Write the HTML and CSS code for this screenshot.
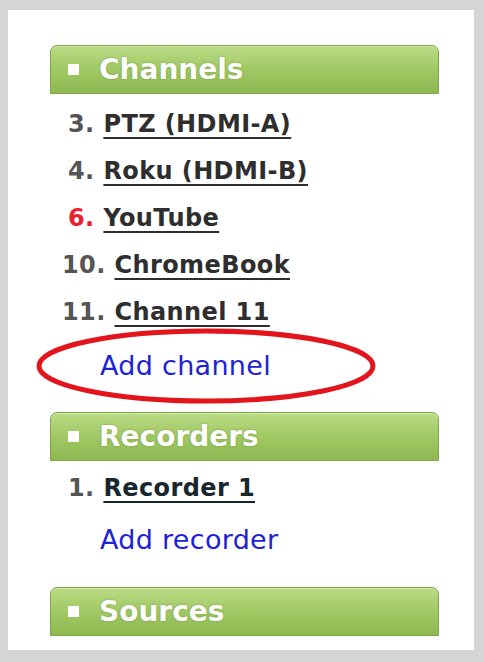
FILE: index.html
```html
<!DOCTYPE html>
<html>
<head>
    <meta charset="UTF-8">
    <title>Channels</title>
    <link rel="stylesheet" href="styles.css">
</head>
<body>
    <div class="panel">
        <div class="head"><span class="bullet"></span>Channels</div>
        <ul class="list channels">
            <li class="item"><span class="num">3.</span> <a href="#">PTZ (HDMI-A)</a></li>
            <li class="item"><span class="num">4.</span> <a href="#">Roku (HDMI-B)</a></li>
            <li class="item"><span class="num live">6.</span> <a href="#">YouTube</a></li>
            <li class="item wide"><span class="num">10.</span> <a href="#">ChromeBook</a></li>
            <li class="item wide"><span class="num">11.</span> <a href="#">Channel 11</a></li>
        </ul>
        <a class="add add-channel" href="#">Add channel</a>

        <div class="head head-rec"><span class="bullet"></span>Recorders</div>
        <ul class="list recorders">
            <li class="item"><span class="num">1.</span> <a class="rec" href="#">Recorder 1</a></li>
        </ul>
        <a class="add add-recorder" href="#">Add recorder</a>

        <div class="head head-src"><span class="bullet"></span>Sources</div>

        <!-- red circle drawn over "Add channel" -->
        <svg class="mark" width="344" height="80" viewBox="0 0 344 80">
            <ellipse cx="172" cy="38" rx="167" ry="35" fill="none" stroke="#e2141c" stroke-width="5"/>
        </svg>
    </div>
</body>
</html>
```

FILE: styles.css
```css
body {
    margin: 0;
    background-color: #d5d5d5;
    font-family: "DejaVu Sans", Verdana, sans-serif;
}

.panel {
    position: relative;
    margin: 10px 10px 0 8px;
    height: 640px;
    padding: 35px 35px 0 42px;
    box-sizing: border-box;
    background-color: #fff;
}

.head {
    display: flex;
    align-items: center;
    height: 49px;
    box-sizing: border-box;
    padding-left: 17px;
    border: 1px solid #7ea645;
    border-radius: 7px 7px 0 0;
    background: linear-gradient(#bcdb86, #a2ca66 45%, #8db951);
    box-shadow: inset 0 1px 0 #d3e8ab;
    color: #fff;
    font-size: 28px;
    font-weight: bold;
    text-shadow: 0 0 2px rgba(60, 90, 20, 0.45);
}

.bullet {
    width: 11px;
    height: 11px;
    margin-right: 20px;
    background-color: #fff;
}

.list {
    list-style: none;
    margin: 7px 0 0;
    padding: 0;
}

.item {
    height: 47px;
    line-height: 47px;
    padding-left: 18px;
    font-size: 24px;
    font-weight: bold;
    letter-spacing: 0.4px;
    color: #555;
    white-space: nowrap;
}

.item.wide {
    padding-left: 12px;
}

.item a {
    color: #2e2e2e;
    text-decoration: underline;
    text-decoration-thickness: 2px;
    text-underline-offset: 5px;
}

.num.live {
    color: #e8222c;
}

.item a.rec {
    color: #17262f;
}

.add {
    display: block;
    height: 47px;
    line-height: 47px;
    padding-left: 50px;
    font-size: 27px;
    letter-spacing: 0.3px;
    color: #1d22d6;
    text-decoration: none;
}

.add-channel {
    margin-top: 6px;
}

.head-rec {
    margin-top: 23px;
}

.recorders {
    margin-top: 4px;
}

.add-recorder {
    margin-top: 4px;
}

.head-src {
    margin-top: 24px;
}

.mark {
    position: absolute;
    left: 26px;
    top: 318px;
}
```
